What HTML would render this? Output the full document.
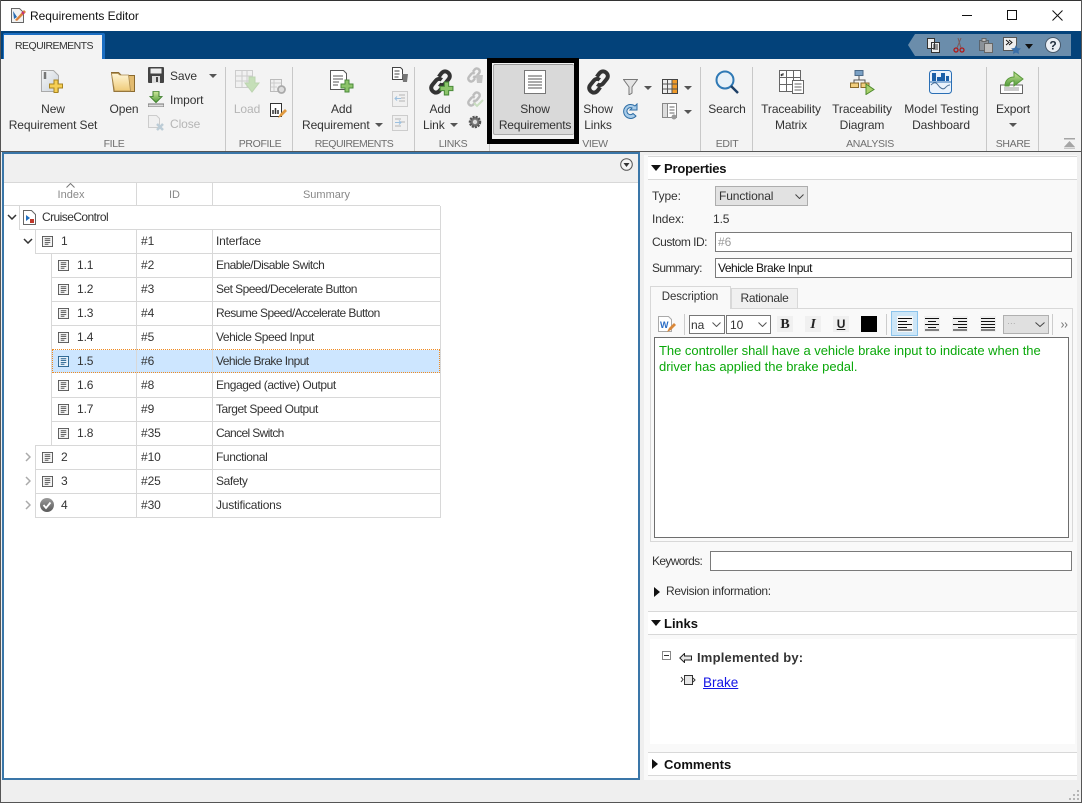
<!DOCTYPE html>
<html><head><meta charset="utf-8"><title>Requirements Editor</title>
<style>
html,body{margin:0;padding:0;background:#fff}
#w{position:relative;width:1082px;height:803px;overflow:hidden;background:#fff;font-family:"Liberation Sans",sans-serif}
#w div,#w svg,#w span,#w a{position:absolute}
.t{white-space:nowrap;font-size:12px;line-height:16px;color:#333;letter-spacing:-.1px}
.c{text-align:center}
.g{color:#6e6e6e;font-size:10.5px;letter-spacing:-.35px}
.d{color:#b5b5b5}
.l{background:#c8c8c8;width:1px;top:67px;height:84px}
.inp{background:#fff;border:1px solid #7a7a7a;box-sizing:border-box}
.h{background:#d8d8d8;height:1px}
.v{background:#d8d8d8;width:1px}
.b{font-weight:bold;color:#111;font-size:13px}
</style></head><body><div id="w">
<svg width="0" height="0" style="left:0;top:0">
<defs>
<symbol id="doc" viewBox="0 0 12 12"><rect x=".5" y=".5" width="11" height="11" fill="#f4f4f4" stroke="#555"/><path d="M3 3h6M3 5h6M3 7h6M3 9h4" stroke="#555" fill="none"/></symbol>
<symbol id="docb" viewBox="0 0 12 12"><rect x=".5" y=".5" width="11" height="11" fill="#e6f1fb" stroke="#24618f"/><path d="M3 3h6M3 5h6M3 7h6M3 9h4" stroke="#24618f" fill="none"/></symbol>
<symbol id="plusg" viewBox="0 0 14 14"><path d="M5 1h4v4h4v4H9v4H5V9H1V5h4z" fill="#8cc46a" stroke="#4a8a3a"/></symbol>
<symbol id="link" viewBox="0 0 30 30"><path d="M13 9l3-4c2-2.500 5-3 7.500-1s3 5 1 7.500l-4 5c-2 2.500-5 2.500-7 1M17 21l-3 4c-2 2.500-5 3-7.500 1s-3-5-1-7.500l4-5c2-2.500 5-2.500 7-1" fill="none" stroke="#333" stroke-width="4.600"/></symbol>
<symbol id="linkg" viewBox="0 0 30 30"><path d="M13 9l3-4c2-2.500 5-3 7.500-1s3 5 1 7.500l-4 5c-2 2.500-5 2.500-7 1M17 21l-3 4c-2 2.500-5 3-7.500 1s-3-5-1-7.500l4-5c2-2.500 5-2.500 7-1" fill="none" stroke="#bdbdbd" stroke-width="4.600"/></symbol>
<linearGradient id="fo" x1="0" y1="0" x2="0" y2="1"><stop offset="0" stop-color="#fff6d8"/><stop offset="1" stop-color="#efca78"/></linearGradient>
<linearGradient id="gy" x1="0" y1="0" x2="1" y2="1"><stop offset="0" stop-color="#f6f6f6"/><stop offset="1" stop-color="#c9d2dc"/></linearGradient>
<linearGradient id="ck" x1="0" y1="0" x2="0" y2="1"><stop offset="0" stop-color="#9a9a9a"/><stop offset="1" stop-color="#5a5a5a"/></linearGradient>
<linearGradient id="ar" x1="0" y1="0" x2="0" y2="1"><stop offset="0" stop-color="#cfe89a"/><stop offset="1" stop-color="#4f9a3a"/></linearGradient>
</defs></svg>

<!-- window frame / title -->
<div style="left:0;top:0;width:1082px;height:1px;background:#333"></div>
<div style="left:0;top:0;width:1px;height:803px;background:#555"></div>
<div style="left:1081px;top:0;width:1px;height:803px;background:#555"></div>
<div style="left:0;top:802px;width:1082px;height:1px;background:#555"></div>
<svg style="left:10px;top:7px" width="16" height="17" viewBox="0 0 16 17"><path d="M1.500 1.500h8l4 4v10h-12z" fill="#f2f2f2" stroke="#666"/><path d="M3 4l4 6-3 2z" fill="#2b6cb0"/><path d="M5 13l9-10 2 2-9 9z" fill="#d9803a"/><path d="M12 5l2 2" stroke="#c4307a" stroke-width="2"/></svg>
<span class="t" style="left:30px;top:8px;color:#111;letter-spacing:-.03px">Requirements Editor</span>
<div style="left:962px;top:15px;width:10px;height:1px;background:#111"></div>
<div style="left:1007px;top:10px;width:8px;height:8px;border:1px solid #111"></div>
<svg style="left:1052px;top:10px" width="11" height="11"><path d="M.5.500l10 10M10.500.500l-10 10" stroke="#111" fill="none"/></svg>

<!-- blue band -->
<div style="left:1px;top:31px;width:1080px;height:28px;background:#03427a"></div>
<div style="left:3px;top:33px;width:102px;height:26px;background:#1b6ec2;border-radius:2px 2px 0 0"></div>
<div style="left:4px;top:35px;width:98px;height:24px;background:#f3f3f3"></div>
<span class="t c" style="left:4px;top:38px;width:100px;font-size:10.500px;letter-spacing:-.55px">REQUIREMENTS</span>
<svg style="left:908px;top:34px" width="170" height="22"><path d="M7 0H163V22H7L0 11z" fill="#6b8dab"/></svg>
<svg style="left:926px;top:37px" width="16" height="17"><path d="M1.500 1.500h7v10h-7zM5.500 5.500h8v10h-8z" fill="#eee" stroke="#333"/><path d="M7 8h5M7 10h5M7 12h5" stroke="#333"/></svg>
<svg style="left:953px;top:37px" width="12" height="17"><path d="M8 1L4 11M5 1l3 10" stroke="#7a5a5a"/><circle cx="3" cy="13" r="2" fill="none" stroke="#b01818" stroke-width="1.300"/><circle cx="9" cy="13" r="2" fill="none" stroke="#b01818" stroke-width="1.300"/></svg>
<svg style="left:979px;top:37px" width="15" height="17"><path d="M.5 3.500h9v10h-9z" fill="#8b9198" stroke="#5a646e"/><path d="M3 1.500h4v3H3zM5.500 6.500h8v9h-8z" fill="#bbb" stroke="#666"/></svg>
<svg style="left:1003px;top:37px" width="20" height="17"><path d="M.5.500h13v13H.5z" fill="#eee" stroke="#555"/><path d="M3 3l3 2.500L3 8M6 3l3 2.500L6 8" fill="none" stroke="#111"/><path d="M13 8l1.500 3 3.500.5-2.500 2.300.6 3.200L13 15.500 9.900 17l.6-3.200L8 11.500l3.500-.5z" fill="#3a6fa8"/></svg>
<svg style="left:1024px;top:44px" width="10" height="5"><path d="M1 0h8L5 5z" fill="#111"/></svg>
<svg style="left:1045px;top:37px" width="16" height="16"><circle cx="8" cy="8" r="7.500" fill="#e9eef4" stroke="#46586a"/><text x="8" y="12.500" text-anchor="middle" font-family="Liberation Sans" font-weight="bold" font-size="12" fill="#1f2d3d">?</text></svg>

<!-- ribbon -->
<div style="left:1px;top:59px;width:1080px;height:92px;background:#f3f3f3"></div>
<div class="l" style="left:225px"></div><div class="l" style="left:292px"></div><div class="l" style="left:414px"></div>
<div class="l" style="left:489px;top:144px;height:7px"></div><div class="l" style="left:700px"></div><div class="l" style="left:752px"></div><div class="l" style="left:986px"></div><div class="l" style="left:1038px"></div>

<!-- File -->
<svg style="left:41px;top:70px" width="26" height="25"><path d="M.5.500h12l5 5v16H.5z" fill="url(#gy)" stroke="#aaa"/><path d="M4 2v7" stroke="#777" stroke-width="2.500"/><path d="M13 10h4v4h4.500v4H17v4.500h-4V18H8.500v-4H13z" fill="#f6cf55" stroke="#a88420"/></svg>
<span class="t c" style="left:3px;top:101px;width:100px">New</span>
<span class="t c" style="left:3px;top:117px;width:100px">Requirement Set</span>
<svg style="left:111px;top:72px" width="25" height="20"><path d="M.5.500h7l3 3h13v16H3z" fill="#e2bb70" stroke="#8a6a30"/><path d="M.5 1.500l3 17.500h16l-2-16H9L7 1.500z" fill="url(#fo)" stroke="#a98a50" stroke-width=".8"/></svg>
<span class="t c" style="left:104px;top:101px;width:40px">Open</span>
<svg style="left:148px;top:67px" width="16" height="16"><rect width="16" height="16" rx="1" fill="#444"/><rect x="2.500" y="1.500" width="11" height="5" fill="#eee"/><rect x="4" y="9" width="8" height="7" fill="#ddd"/><rect x="8" y="10" width="2" height="5" fill="#444"/></svg>
<span class="t" style="left:170px;top:68px">Save</span>
<svg style="left:209px;top:74px" width="8" height="4"><path d="M0 0h8L4 4z" fill="#555"/></svg>
<svg style="left:148px;top:91px" width="16" height="16"><path d="M5 0h6v6h3l-6 7-6-7h3z" fill="url(#ar)" stroke="#3e7f2c" transform="translate(0 .5) scale(1 .85)"/><rect x="0" y="13" width="16" height="3" fill="#ddd" stroke="#777"/></svg>
<span class="t" style="left:170px;top:92px">Import</span>
<svg style="left:148px;top:115px" width="16" height="16"><path d="M.5.500h8l3 3v9h-11z" fill="#f0f0f0" stroke="#ccc"/><path d="M9 9l6 6M15 9l-6 6" stroke="#bcccd6" stroke-width="2.500"/></svg>
<span class="t d" style="left:170px;top:116px">Close</span>
<span class="t c g" style="left:84px;top:136px;width:60px">FILE</span>

<!-- Profile -->
<svg style="left:235px;top:70px" width="25" height="24"><rect x=".5" y=".5" width="17" height="17" fill="#f1f1f1" stroke="#ccc"/><path d="M1 6h16M1 11h16M7 1v16M12 1v16" stroke="#ccc"/><path d="M14 7h6v6h4l-7 9-7-9h4z" fill="#c5dfb8" stroke="#bcd4b0"/></svg>
<span class="t c d" style="left:232px;top:101px;width:30px">Load</span>
<svg style="left:270px;top:79px" width="17" height="16"><rect x=".5" y=".5" width="11" height="12" fill="#f0f0f0" stroke="#bbb"/><path d="M1 4h10M1 8h6M4 1v11" stroke="#ccc"/><circle cx="11.500" cy="10.500" r="3.500" fill="#ddd" stroke="#aaa" stroke-width="1.800"/></svg>
<svg style="left:270px;top:103px" width="17" height="16"><rect x=".5" y=".5" width="11" height="13" fill="#fff" stroke="#333"/><path d="M3 11V7M5.500 11V5M8 11V7" stroke="#333" stroke-width="1.500"/><path d="M8 15l2-4 5-5 2 2-5 5z" fill="#e09a40"/></svg>
<span class="t c g" style="left:230px;top:136px;width:60px">PROFILE</span>

<!-- Requirements -->
<svg style="left:330px;top:70px" width="25" height="24"><path d="M.5.500h13l3 3v16H.5z" fill="#fff" stroke="#555"/><path d="M3 6h10M3 9h10M3 12h6M3 15h5" stroke="#555"/><use href="#plusg" x="10" y="9" width="14" height="14"/></svg>
<span class="t c" style="left:300px;top:101px;width:83px">Add</span>
<span class="t" style="left:302px;top:117px">Requirement</span>
<svg style="left:375px;top:123px" width="8" height="4"><path d="M0 0h8L4 4z" fill="#555"/></svg>
<svg style="left:392px;top:67px" width="17" height="16"><path d="M.5.500h8l2 2v10H.500z" fill="#fff" stroke="#444"/><path d="M2.500 4h5M2.500 7h5M2.500 10h4" stroke="#444"/><path d="M10 7h6l-1 8h-4z" fill="#777"/></svg>
<svg style="left:392px;top:91px" width="16" height="16"><rect x=".5" y=".5" width="15" height="15" fill="#f0f0f0" stroke="#ccc"/><path d="M7 4h6M9 7h4M7 10h6" stroke="#b4b4b4"/><path d="M9 7.500H3M5 5.500l-2 2 2 2" stroke="#9cc0df" fill="none"/></svg>
<svg style="left:392px;top:115px" width="16" height="16"><rect x=".5" y=".5" width="15" height="15" fill="#f0f0f0" stroke="#ccc"/><path d="M3 4h6M3 11h6M9 7h4" stroke="#b4b4b4"/><path d="M3 7.500h6M7 5.500l2 2-2 2" stroke="#9cc0df" fill="none"/></svg>
<span class="t c g" style="left:302px;top:136px;width:104px;letter-spacing:-.5px">REQUIREMENTS</span>

<!-- Links -->
<svg style="left:427px;top:69px" width="28" height="27"><use href="#link" width="27" height="26"/><use href="#plusg" x="12" y="12" width="15" height="15"/></svg>
<span class="t c" style="left:420px;top:101px;width:40px">Add</span>
<span class="t" style="left:423px;top:117px">Link</span>
<svg style="left:450px;top:123px" width="8" height="4"><path d="M0 0h8L4 4z" fill="#555"/></svg>
<svg style="left:466px;top:67px" width="18" height="17"><use href="#linkg" width="16" height="16"/><path d="M10 8h7l-1 8h-5z" fill="#c4c4c4"/></svg>
<svg style="left:466px;top:91px" width="18" height="17"><use href="#linkg" width="16" height="16"/><path d="M8 12l3 3 6-6" stroke="#c9dfc0" stroke-width="2" fill="none"/></svg>
<svg style="left:468px;top:115px" width="14" height="14"><circle cx="7" cy="7" r="5" fill="#777" stroke="#555" stroke-width="2.500" stroke-dasharray="2 1"/><circle cx="7" cy="7" r="2.200" fill="#ddd"/></svg>
<span class="t c g" style="left:428px;top:136px;width:50px">LINKS</span>

<!-- Show Requirements -->
<div style="left:487px;top:58px;width:92px;height:86px;background:#000"></div>
<div style="left:492px;top:63px;width:82px;height:76px;background:#f3f3f3"></div>
<div style="left:493px;top:64px;width:81px;height:71px;background:#d9d9d9;border:1px solid #aaa;box-sizing:border-box;border-radius:2px;border-top-color:#999;border-right:0"></div>
<svg style="left:524px;top:70px" width="22" height="24"><rect x=".5" y=".5" width="21" height="23" fill="#fff" stroke="#777"/><path d="M4 6h14M4 9h14M4 12h14M4 15h14M4 18h14" stroke="#555"/></svg>
<span class="t c" style="left:493px;top:101px;width:84px">Show</span>
<span class="t c" style="left:493px;top:117px;width:84px;letter-spacing:-.2px">Requirements</span>

<!-- View -->
<svg style="left:585px;top:69px" width="27" height="26"><use href="#link" width="27" height="26"/></svg>
<span class="t c" style="left:578px;top:101px;width:40px">Show</span>
<span class="t c" style="left:578px;top:117px;width:40px">Links</span>
<svg style="left:623px;top:79px" width="15" height="16"><path d="M.5.500h14L9 8v6l-3 2V8z" fill="#e4e4e4" stroke="#777"/></svg>
<svg style="left:644px;top:86px" width="8" height="4"><path d="M0 0h8L4 4z" fill="#555"/></svg>
<svg style="left:662px;top:79px" width="16" height="15"><rect x=".5" y=".5" width="15" height="14" fill="#eee" stroke="#444"/><rect x="10" y="1" width="5" height="13" fill="#f09a28"/><path d="M1 5h14M1 10h14M5.500 1v13M10 1v13" stroke="#555"/></svg>
<svg style="left:684px;top:86px" width="8" height="4"><path d="M0 0h8L4 4z" fill="#555"/></svg>
<svg style="left:622px;top:103px" width="16" height="16"><path d="M13 3A7 7 0 1 0 14 13L11 10.500A3.500 3.500 0 1 1 10 5L8 7h7V1z" fill="#a9cdea" stroke="#2e6da4"/></svg>
<svg style="left:662px;top:103px" width="16" height="17"><rect x=".5" y=".5" width="5" height="14" fill="#ddd" stroke="#888"/><rect x="5.500" y=".5" width="9" height="14" fill="#fff" stroke="#888"/><path d="M7.500 4h5M7.500 7h5M7.500 10h5" stroke="#666"/><circle cx="12" cy="14" r="2.500" fill="#999"/></svg>
<svg style="left:684px;top:110px" width="8" height="4"><path d="M0 0h8L4 4z" fill="#555"/></svg>
<span class="t c g" style="left:575px;top:136px;width:40px">VIEW</span>

<!-- Edit -->
<svg style="left:715px;top:70px" width="24" height="25"><circle cx="10" cy="10" r="8.500" fill="#e8f1f8" stroke="#2f79b5" stroke-width="2"/><path d="M16 16l7 7" stroke="#1d3f66" stroke-width="2.500"/></svg>
<span class="t c" style="left:705px;top:101px;width:44px">Search</span>
<span class="t c g" style="left:707px;top:136px;width:40px">EDIT</span>

<!-- Analysis -->
<svg style="left:779px;top:70px" width="25" height="24"><path d="M.5.500h21v21H.5zM7.500 1v21M14.500 1v21M1 7.500h21M1 14.500h21" fill="#fff" stroke="#666"/><path d="M4 3v2H2M3 4L2 5l1 1" stroke="#333" fill="none"/><path d="M13.500 10.500h11v13h-11z" fill="#fff" stroke="#666"/><path d="M15.500 14h7M15.500 17h7M15.500 20h7" stroke="#666"/></svg>
<span class="t c" style="left:751px;top:101px;width:80px">Traceability</span>
<span class="t c" style="left:751px;top:117px;width:80px">Matrix</span>
<svg style="left:850px;top:70px" width="25" height="25"><rect x="5" y=".5" width="8" height="5" fill="#7aa0c4" stroke="#4c6a88"/><path d="M9 6v4M4 13v-3h11v3" fill="none" stroke="#555"/><rect x=".5" y="13" width="8" height="4.500" fill="#f3cf7e" stroke="#8a6a2a"/><rect x="11" y="13" width="8" height="4.500" fill="#f3cf7e" stroke="#8a6a2a"/><path d="M16 14l8 5.500-8 5z" fill="#a9d06c" stroke="#4d8a2c"/></svg>
<span class="t c" style="left:822px;top:101px;width:80px">Traceability</span>
<span class="t c" style="left:822px;top:117px;width:80px">Diagram</span>
<svg style="left:929px;top:70px" width="23" height="24"><rect x=".5" y=".5" width="22" height="23" rx="3" fill="#eaf2fb" stroke="#2a6fb5"/><path d="M3 3h4v8H3zM8 7h4v4H8zM12 3h4v8h-4zM17 6h3v5h-3z" fill="#1b5fa8"/><path d="M1 12h21" stroke="#2a6fb5"/><path d="M2 15c3-3 5-3 7 0s5 5 7 3 3-3 5-3" fill="none" stroke="#4a6f96"/></svg>
<span class="t c" style="left:896.5px;top:101px;width:90px;letter-spacing:.05px">Model Testing</span>
<span class="t c" style="left:897px;top:117px;width:88px">Dashboard</span>
<span class="t c g" style="left:833px;top:136px;width:74px">ANALYSIS</span>

<!-- Share -->
<svg style="left:1000px;top:70px" width="24" height="24"><rect x=".5" y="15" width="22" height="8.500" fill="#fff" stroke="#666"/><rect x="4" y="17" width="15" height="4" fill="#ccc"/><path d="M5 16c0-6 4-9 9-9V2l9 7-9 7v-5c-3 0-5 2-5 5z" fill="url(#ar)" stroke="#5a9a3c"/></svg>
<span class="t c" style="left:992px;top:101px;width:42px">Export</span>
<svg style="left:1009px;top:123px" width="8" height="4"><path d="M0 0h8L4 4z" fill="#555"/></svg>
<span class="t c g" style="left:992px;top:136px;width:42px">SHARE</span>
<svg style="left:1064px;top:138px" width="11" height="11"><path d="M0 0h11v1.500H0zM5.500 3L11 9H0z" fill="#a5a5a5"/><path d="M0 9.500h11V11H0z" fill="#c8c8c8"/></svg>
<div style="left:1px;top:151px;width:1080px;height:1px;background:#555"></div>

<!-- bottom + right background -->
<div style="left:1px;top:152px;width:1080px;height:650px;background:#efefef"></div>

<!-- left pane -->
<div style="left:2px;top:152px;width:638px;height:628px;box-sizing:border-box;border:2px solid #3a76a8;background:#fff"></div>
<div style="left:4px;top:154px;width:634px;height:28px;background:#f0f0f0;border-bottom:1px solid #d8d8d8"></div>
<svg style="left:620px;top:158px" width="13" height="13"><circle cx="6.500" cy="6.500" r="5.800" fill="#f4f4f4" stroke="#555"/><path d="M3.500 5h6L6.500 9z" fill="#333"/></svg>
<svg style="left:66px;top:183px" width="9" height="5"><path d="M.5 4.500l4-4 4 4" fill="none" stroke="#777"/></svg>
<span class="t c" style="left:36px;top:187px;width:70px;color:#888;font-size:11px;letter-spacing:0">Index</span>
<span class="t c" style="left:137px;top:187px;width:75px;color:#888;font-size:11px;letter-spacing:0">ID</span>
<span class="t c" style="left:213px;top:187px;width:227px;color:#888;font-size:11px;letter-spacing:0">Summary</span>
<div class="v" style="left:136px;top:183px;height:23px"></div>
<div class="v" style="left:212px;top:183px;height:23px"></div>

<!-- selected row -->
<div style="left:52px;top:350px;width:388px;height:23px;background:#cde6ff"></div>
<!-- table grid -->
<div class="h" style="left:4px;top:205px;width:436px"></div>
<div class="h" style="left:19px;top:229px;width:421px"></div>
<div class="h" style="left:35px;top:253px;width:405px"></div>
<div class="h" style="left:51px;top:277px;width:389px"></div>
<div class="h" style="left:51px;top:301px;width:389px"></div>
<div class="h" style="left:51px;top:325px;width:389px"></div>
<div class="h" style="left:51px;top:397px;width:389px"></div>
<div class="h" style="left:51px;top:421px;width:389px"></div>
<div class="h" style="left:35px;top:445px;width:405px"></div>
<div class="h" style="left:35px;top:469px;width:405px"></div>
<div class="h" style="left:35px;top:493px;width:405px"></div>
<div class="h" style="left:35px;top:517px;width:405px"></div>
<div class="v" style="left:19px;top:206px;height:24px"></div>
<div class="v" style="left:35px;top:230px;height:24px"></div>
<div class="v" style="left:35px;top:446px;height:72px"></div>
<div class="v" style="left:51px;top:254px;height:192px"></div>
<div class="v" style="left:136px;top:230px;height:288px"></div>
<div class="v" style="left:212px;top:230px;height:288px"></div>
<div class="v" style="left:440px;top:206px;height:312px"></div>
<div style="left:52px;top:349px;width:388px;height:24px;box-sizing:border-box;border:1px dotted #f08a20"></div>

<svg style="left:7px;top:214px" width="10" height="6"><path d="M1 1l4 4 4-4" fill="none" stroke="#333" stroke-width="1.500"/></svg>
<svg style="left:23px;top:210px" width="13" height="15"><path d="M.5.500h8l4 4v10H.5z" fill="#fff" stroke="#666"/><path d="M3 5l4 3-4 3z" fill="#1f6fc0"/><rect x="7" y="9" width="4" height="4" fill="#c0392b"/></svg>
<span class="t" style="left:42px;top:209px;letter-spacing:-.56px">CruiseControl</span>

<svg style="left:23px;top:238px" width="10" height="6"><path d="M1 1l4 4 4-4" fill="none" stroke="#333" stroke-width="1.500"/></svg>
<svg style="left:42px;top:236px" width="11" height="11"><use href="#doc" width="11" height="11"/></svg>
<span class="t" style="left:61px;top:233px">1</span><span class="t" style="left:141px;top:233px">#1</span><span class="t" style="left:216px;top:233px;letter-spacing:-.2px">Interface</span>

<svg style="left:58px;top:260px" width="11" height="11"><use href="#doc" width="11" height="11"/></svg>
<span class="t" style="left:77px;top:257px">1.1</span><span class="t" style="left:141px;top:257px">#2</span><span class="t" style="left:216px;top:257px;letter-spacing:-.53px">Enable/Disable Switch</span>
<svg style="left:58px;top:284px" width="11" height="11"><use href="#doc" width="11" height="11"/></svg>
<span class="t" style="left:77px;top:281px">1.2</span><span class="t" style="left:141px;top:281px">#3</span><span class="t" style="left:216px;top:281px;letter-spacing:-.54px">Set Speed/Decelerate Button</span>
<svg style="left:58px;top:308px" width="11" height="11"><use href="#doc" width="11" height="11"/></svg>
<span class="t" style="left:77px;top:305px">1.3</span><span class="t" style="left:141px;top:305px">#4</span><span class="t" style="left:216px;top:305px;letter-spacing:-.57px">Resume Speed/Accelerate Button</span>
<svg style="left:58px;top:332px" width="11" height="11"><use href="#doc" width="11" height="11"/></svg>
<span class="t" style="left:77px;top:329px">1.4</span><span class="t" style="left:141px;top:329px">#5</span><span class="t" style="left:216px;top:329px;letter-spacing:-.47px">Vehicle Speed Input</span>
<svg style="left:58px;top:356px" width="11" height="11"><use href="#docb" width="11" height="11"/></svg>
<span class="t" style="left:77px;top:353px">1.5</span><span class="t" style="left:141px;top:353px">#6</span><span class="t" style="left:216px;top:353px;letter-spacing:-.57px">Vehicle Brake Input</span>
<svg style="left:58px;top:380px" width="11" height="11"><use href="#doc" width="11" height="11"/></svg>
<span class="t" style="left:77px;top:377px">1.6</span><span class="t" style="left:141px;top:377px">#8</span><span class="t" style="left:216px;top:377px;letter-spacing:-.45px">Engaged (active) Output</span>
<svg style="left:58px;top:404px" width="11" height="11"><use href="#doc" width="11" height="11"/></svg>
<span class="t" style="left:77px;top:401px">1.7</span><span class="t" style="left:141px;top:401px">#9</span><span class="t" style="left:216px;top:401px;letter-spacing:-.47px">Target Speed Output</span>
<svg style="left:58px;top:428px" width="11" height="11"><use href="#doc" width="11" height="11"/></svg>
<span class="t" style="left:77px;top:425px">1.8</span><span class="t" style="left:141px;top:425px">#35</span><span class="t" style="left:216px;top:425px;letter-spacing:-.64px">Cancel Switch</span>

<svg style="left:25px;top:452px" width="6" height="10"><path d="M1 1l4 4-4 4" fill="none" stroke="#aaa" stroke-width="1.500"/></svg>
<svg style="left:42px;top:452px" width="11" height="11"><use href="#doc" width="11" height="11"/></svg>
<span class="t" style="left:61px;top:449px">2</span><span class="t" style="left:141px;top:449px">#10</span><span class="t" style="left:216px;top:449px;letter-spacing:-.4px">Functional</span>
<svg style="left:25px;top:476px" width="6" height="10"><path d="M1 1l4 4-4 4" fill="none" stroke="#aaa" stroke-width="1.500"/></svg>
<svg style="left:42px;top:476px" width="11" height="11"><use href="#doc" width="11" height="11"/></svg>
<span class="t" style="left:61px;top:473px">3</span><span class="t" style="left:141px;top:473px">#25</span><span class="t" style="left:216px;top:473px;letter-spacing:-.43px">Safety</span>
<svg style="left:25px;top:500px" width="6" height="10"><path d="M1 1l4 4-4 4" fill="none" stroke="#aaa" stroke-width="1.500"/></svg>
<svg style="left:40px;top:498px" width="14" height="14"><circle cx="7" cy="7" r="7" fill="url(#ck)"/><path d="M3.500 7l2.500 3 4.500-5.500" fill="none" stroke="#fff" stroke-width="1.800"/></svg>
<span class="t" style="left:61px;top:497px">4</span><span class="t" style="left:141px;top:497px">#30</span><span class="t" style="left:216px;top:497px;letter-spacing:-.24px">Justifications</span>

<!-- right pane -->
<div style="left:644px;top:155px;width:433px;height:625px;background:#f9f9f9"></div>
<div style="left:648px;top:156px;width:429px;height:24px;background:#fff;box-sizing:border-box;border-top:1px solid #d8d8d8;border-bottom:1px solid #d8d8d8"></div>
<svg style="left:651px;top:165px" width="10" height="6"><path d="M0 0h10L5 6z" fill="#111"/></svg>
<span class="t b" style="left:664px;top:161px;letter-spacing:-.2px">Properties</span>

<span class="t" style="left:652px;top:188px">Type:</span>
<div style="left:715px;top:186px;width:93px;height:20px;box-sizing:border-box;background:#e2e2e2;border:1px solid #adadad"></div>
<span class="t" style="left:719px;top:188px">Functional</span>
<svg style="left:795px;top:194px" width="9" height="5"><path d="M.5.500l4 4 4-4" fill="none" stroke="#444"/></svg>
<span class="t" style="left:652px;top:211px">Index:</span>
<span class="t" style="left:713px;top:211px">1.5</span>
<span class="t" style="left:652px;top:234px;letter-spacing:-.5px">Custom ID:</span>
<div class="inp" style="left:715px;top:232px;width:357px;height:20px"></div>
<span class="t" style="left:718px;top:234px;color:#999">#6</span>
<span class="t" style="left:652px;top:260px;letter-spacing:-.6px">Summary:</span>
<div class="inp" style="left:715px;top:258px;width:357px;height:20px"></div>
<span class="t" style="left:718px;top:260px;color:#111;letter-spacing:-.5px">Vehicle Brake Input</span>

<!-- tabs -->
<div style="left:650px;top:308px;width:423px;height:234px;box-sizing:border-box;border:1px solid #d8d8d8;background:#f9f9f9"></div>
<div style="left:731px;top:288px;width:67px;height:21px;box-sizing:border-box;border:1px solid #d8d8d8;background:#f0f0f0"></div>
<div style="left:650px;top:286px;width:81px;height:23px;box-sizing:border-box;border:1px solid #d8d8d8;border-bottom:0;background:#f9f9f9"></div>
<span class="t c" style="left:650px;top:289px;width:80px;font-size:11.500px">Description</span>
<span class="t c" style="left:731px;top:290px;width:67px;letter-spacing:-.3px">Rationale</span>

<!-- editor toolbar -->
<svg style="left:658px;top:316px" width="18" height="17"><path d="M.5.500h10l3 3v12H.5z" fill="#fff" stroke="#aaa"/><text x="2" y="12" font-family="Liberation Sans" font-size="9" font-weight="bold" fill="#2b6cc4">W</text><path d="M9 16l2-4 5-5 2 2-5 5z" fill="#d9883a"/></svg>
<div class="v" style="left:684px;top:314px;height:21px;background:#ccc"></div>
<div style="left:689px;top:315px;width:36px;height:19px;box-sizing:border-box;border:1px solid #777;background:#fff"></div>
<span class="t" style="left:691px;top:317px">na</span>
<svg style="left:712px;top:322px" width="9" height="5"><path d="M.5.500l4 4 4-4" fill="none" stroke="#555"/></svg>
<div style="left:726px;top:315px;width:45px;height:19px;box-sizing:border-box;border:1px solid #777;background:#fff"></div>
<span class="t" style="left:730px;top:317px">10</span>
<svg style="left:758px;top:322px" width="9" height="5"><path d="M.5.500l4 4 4-4" fill="none" stroke="#555"/></svg>
<div style="left:777px;top:316px;width:16px;height:16px;background:#f0f0f0"></div>
<span class="t c" style="left:777px;top:317px;width:16px;font-family:'Liberation Serif',serif;font-weight:bold;font-size:14px;color:#222">B</span>
<div style="left:805px;top:316px;width:16px;height:16px;background:#f0f0f0"></div>
<span class="t c" style="left:805px;top:317px;width:16px;font-family:'Liberation Serif',serif;font-style:italic;font-weight:bold;font-size:14px;color:#222">I</span>
<div style="left:833px;top:316px;width:16px;height:16px;background:#f0f0f0"></div>
<span class="t c" style="left:833px;top:316px;width:16px;font-weight:bold;font-size:12px;color:#222;text-decoration:underline">U</span>
<div style="left:861px;top:316px;width:16px;height:16px;background:#000"></div>
<div class="v" style="left:886px;top:314px;height:21px;background:#ccc"></div>
<div style="left:891px;top:311px;width:27px;height:25px;box-sizing:border-box;background:#cde6f7;border:1px solid #8cc4ec"></div>
<svg style="left:897px;top:316px" width="16" height="16"><rect width="16" height="16" fill="#f6f6f6"/><path d="M1 2.500h14M1 5.500h9M1 8.500h14M1 11.500h9M1 14h14" stroke="#111"/></svg>
<svg style="left:924px;top:316px" width="16" height="16"><rect width="16" height="16" fill="#f0f0f0"/><path d="M1 2.500h14M4 5.500h8M1 8.500h14M4 11.500h8M1 14h14" stroke="#111"/></svg>
<svg style="left:952px;top:316px" width="16" height="16"><rect width="16" height="16" fill="#f0f0f0"/><path d="M1 2.500h14M6 5.500h9M1 8.500h14M6 11.500h9M1 14h14" stroke="#111"/></svg>
<svg style="left:980px;top:316px" width="16" height="16"><rect width="16" height="16" fill="#f0f0f0"/><path d="M1 2.500h14M1 5.500h14M1 8.500h14M1 11.500h14M1 14h14" stroke="#111"/></svg>
<div style="left:1003px;top:315px;width:46px;height:19px;box-sizing:border-box;border:1px solid #b0b0b0;background:#e0e0e0"></div>
<span class="t" style="left:1007px;top:315px;color:#aaa;font-size:9px">···</span>
<svg style="left:1035px;top:322px" width="10" height="5"><path d="M.5.500l4.500 4 4.500-4" fill="none" stroke="#444"/></svg>
<div class="v" style="left:1052px;top:314px;height:21px;background:#ccc"></div>
<svg style="left:1061px;top:322px" width="7" height="6"><path d="M.5.500l2 2.500-2 2.500M4 .5l2 2.500-2 2.500" fill="none" stroke="#777"/></svg>

<div style="left:654px;top:337px;width:415px;height:201px;box-sizing:border-box;border:1px solid #6e6e6e;background:#fff"></div>
<span class="t" style="left:659px;top:343px;color:#0aa80a;font-size:13px;letter-spacing:-.03px">The controller shall have a vehicle brake input to indicate when the</span>
<span class="t" style="left:659px;top:359px;color:#0aa80a;font-size:13px;letter-spacing:-.03px">driver has applied the brake pedal.</span>

<span class="t" style="left:652px;top:553px;letter-spacing:-.65px">Keywords:</span>
<div class="inp" style="left:710px;top:551px;width:362px;height:20px"></div>
<svg style="left:654px;top:587px" width="6" height="10"><path d="M0 0l6 5-6 5z" fill="#111"/></svg>
<span class="t" style="left:666px;top:583px;letter-spacing:-.35px">Revision information:</span>

<!-- links -->
<div style="left:648px;top:611px;width:429px;height:24px;background:#fff;box-sizing:border-box;border-top:1px solid #d8d8d8;border-bottom:1px solid #d8d8d8"></div>
<svg style="left:651px;top:620px" width="10" height="6"><path d="M0 0h10L5 6z" fill="#111"/></svg>
<span class="t b" style="left:664px;top:616px;letter-spacing:0">Links</span>
<div style="left:650px;top:639px;width:425px;height:105px;background:#fff"></div>
<svg style="left:662px;top:651px" width="9" height="9"><rect x=".5" y=".5" width="8" height="8" fill="#fff" stroke="#888"/><path d="M2 4.500h5" stroke="#333"/></svg>
<svg style="left:679px;top:653px" width="13" height="10"><path d="M5.500.5L.8 5l4.700 4.500V7h7V3h-7z" fill="#e8e8e8" stroke="#222"/></svg>
<span class="t" style="left:697px;top:650px;font-weight:bold;font-size:13px;color:#333;letter-spacing:.2px">Implemented by:</span>
<svg style="left:680px;top:675px" width="16" height="11"><rect x="4.500" y=".5" width="8" height="9" fill="#e6e6e6" stroke="#333"/><path d="M1 2l2 2.500L1 7M13 3l2 2-2 2" fill="none" stroke="#333"/></svg>
<a class="t" style="left:703px;top:675px;color:#1414e6;text-decoration:underline;letter-spacing:0;font-size:13.5px">Brake</a>

<!-- comments -->
<div style="left:648px;top:752px;width:429px;height:24px;background:#fff;box-sizing:border-box;border-top:1px solid #d8d8d8;border-bottom:1px solid #d8d8d8"></div>
<svg style="left:652px;top:759px" width="6" height="10"><path d="M0 0l6 5-6 5z" fill="#111"/></svg>
<span class="t b" style="left:664px;top:757px;letter-spacing:0">Comments</span>

<svg style="left:1069px;top:790px" width="11" height="11"><path d="M8 0h2v2H8zM4 4h2v2H4zM8 4h2v2H8zM0 8h2v2H0zM4 8h2v2H4zM8 8h2v2H8z" fill="#b5b5b5"/></svg>
</div></body></html>
